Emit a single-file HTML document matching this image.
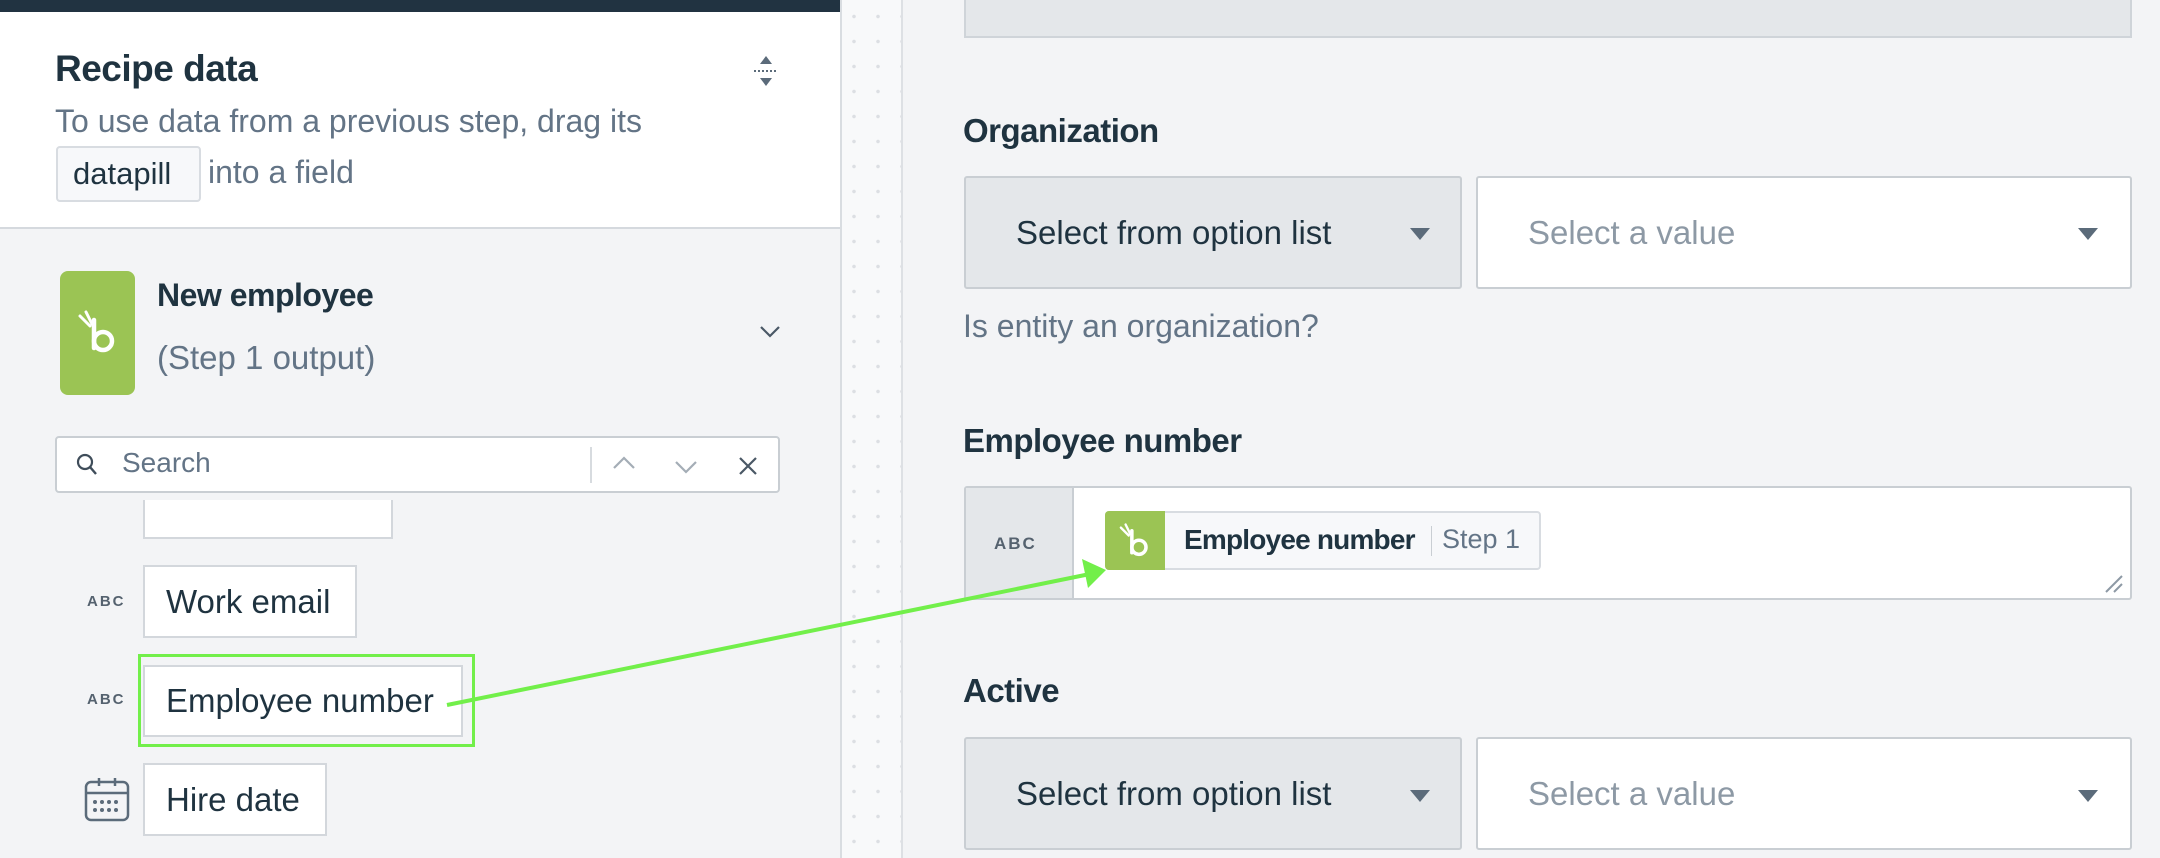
<!DOCTYPE html>
<html><head><meta charset="utf-8"><style>
*{margin:0;padding:0;box-sizing:border-box}
body{width:2160px;height:858px;overflow:hidden;background:#f3f4f6;font-family:"Liberation Sans",sans-serif;color:#1f3340;position:relative}
.a{position:absolute}
.t{white-space:nowrap}
.pill{position:absolute;background:#fff;border:2px solid #d3d7dc;font-size:33px;padding-left:21px;display:flex;align-items:center;color:#1f3340}
.abc{position:absolute;font-size:15px;font-weight:bold;letter-spacing:2px;color:#55626f}
.sel{position:absolute;border:2px solid #c9ced3;border-radius:3px;display:flex;align-items:center;font-size:33px}
.tri{position:absolute;width:0;height:0;border-left:10px solid transparent;border-right:10px solid transparent;border-top:12px solid #5b6b7a}
</style></head><body>
<div class="a" style="left:0;top:0;width:840px;height:229px;background:#fff;border-bottom:2px solid #d5d9de"></div>
<div class="a" style="left:0;top:0;width:840px;height:12px;background:#213341"></div>
<div class="a" style="left:840px;top:0;width:63px;height:858px;background-color:#f8f9fa;background-image:radial-gradient(circle,#dcdfe3 1.6px,transparent 2px);background-size:24px 25px;background-position:0px 4px;border-left:2px solid #d9dde1;border-right:2px solid #dde0e4"></div>
<div class="a t" style="left:55px;top:48px;font-size:37px;font-weight:bold;letter-spacing:-0.5px">Recipe data</div>
<svg class="a" style="left:753px;top:54px" width="26" height="34" viewBox="0 0 26 34"><path d="M13 2 L19 10 L7 10Z" fill="#5b6b7a"/><path d="M13 32 L19 24 L7 24Z" fill="#5b6b7a"/><line x1="1" y1="17" x2="25" y2="17" stroke="#5b6b7a" stroke-width="2" stroke-dasharray="2 2"/></svg>
<div class="a t" style="left:55px;top:103px;font-size:32px;color:#637486">To use data from a previous step, drag its</div>
<div class="a t" style="left:56px;top:146px;width:145px;height:56px;background:#f7f8fa;border:2px solid #d8dce1;border-radius:4px;font-size:31px;color:#1f3340;padding:8px 0 0 15px">datapill</div>
<div class="a t" style="left:208px;top:154px;font-size:32px;color:#637486">into a field</div>

<div class="a" style="left:60px;top:271px;width:75px;height:124px;background:#9bc454;border-radius:8px"></div>
<svg class="a" style="left:70px;top:308px" width="56" height="50" viewBox="0 0 56 50"><path d="M10 8 L20 18 M16 4 L22 16" stroke="#fff" stroke-width="3" stroke-linecap="round" fill="none"/><path d="M24 12 L24 40" stroke="#fff" stroke-width="4.5" stroke-linecap="round"/><circle cx="33" cy="33" r="9" stroke="#fff" stroke-width="4.5" fill="none"/></svg>
<div class="a t" style="left:157px;top:277px;font-size:32px;font-weight:bold;letter-spacing:-0.5px">New employee</div>
<div class="a t" style="left:157px;top:339px;font-size:33px;color:#637486">(Step 1 output)</div>
<svg class="a" style="left:759px;top:325px" width="22" height="14" viewBox="0 0 22 14"><path d="M2 2 L11 11 L20 2" stroke="#4a5866" stroke-width="2.2" fill="none"/></svg>

<div class="a" style="left:55px;top:436px;width:725px;height:57px;background:#fff;border:2px solid #c9ced3;border-radius:4px"></div>
<svg class="a" style="left:76px;top:453px" width="22" height="24" viewBox="0 0 22 24"><circle cx="9" cy="9" r="7" stroke="#3f4d5a" stroke-width="2.2" fill="none"/><path d="M14 14 L20 21" stroke="#3f4d5a" stroke-width="2.4"/></svg>
<div class="a t" style="left:122px;top:447px;font-size:28px;color:#637486">Search</div>
<div class="a" style="left:590px;top:447px;width:2px;height:36px;background:#d7dbdf"></div>
<svg class="a" style="left:612px;top:456px" width="24" height="14" viewBox="0 0 24 14"><path d="M2 12 L12 2 L22 12" stroke="#a4adb6" stroke-width="2.2" fill="none"/></svg>
<svg class="a" style="left:674px;top:460px" width="24" height="14" viewBox="0 0 24 14"><path d="M2 2 L12 12 L22 2" stroke="#a4adb6" stroke-width="2.2" fill="none"/></svg>
<svg class="a" style="left:738px;top:456px" width="20" height="20" viewBox="0 0 20 20"><path d="M2 2 L18 18 M18 2 L2 18" stroke="#4a5866" stroke-width="2.2"/></svg>

<div class="a" style="left:143px;top:500px;width:250px;height:39px;background:#fff;border:2px solid #d3d7dc;border-top:none"></div>
<div class="abc" style="left:87px;top:593px">ABC</div>
<div class="pill" style="left:143px;top:565px;width:214px;height:73px">Work email</div>
<div class="abc" style="left:87px;top:691px">ABC</div>
<div class="pill" style="left:143px;top:665px;width:320px;height:72px">Employee number</div>
<div class="a" style="left:138px;top:654px;width:337px;height:93px;border:3px solid #72ef4a"></div>
<svg class="a" style="left:84px;top:776px" width="48" height="46" viewBox="0 0 48 46"><rect x="2" y="6" width="42" height="38" rx="5" stroke="#5b6b7a" stroke-width="2.5" fill="none"/><line x1="2" y1="17" x2="44" y2="17" stroke="#5b6b7a" stroke-width="2.5"/><line x1="15" y1="2" x2="15" y2="10" stroke="#5b6b7a" stroke-width="2.5"/><line x1="31" y1="2" x2="31" y2="10" stroke="#5b6b7a" stroke-width="2.5"/><g fill="#5b6b7a"><circle cx="11" cy="26" r="2"/><circle cx="18" cy="26" r="2"/><circle cx="25" cy="26" r="2"/><circle cx="32" cy="26" r="2"/><circle cx="11" cy="34" r="2"/><circle cx="18" cy="34" r="2"/><circle cx="25" cy="34" r="2"/><circle cx="32" cy="34" r="2"/></g></svg>
<div class="pill" style="left:143px;top:763px;width:184px;height:73px">Hire date</div>

<div class="a" style="left:964px;top:-2px;width:1168px;height:40px;background:#e4e7ea;border:2px solid #cfd4d9"></div>
<div class="a t" style="left:963px;top:112px;font-size:33px;font-weight:bold;letter-spacing:-0.5px">Organization</div>
<div class="sel" style="left:964px;top:176px;width:498px;height:113px;background:#e4e7ea;padding-left:50px">Select from option list</div>
<div class="tri" style="left:1410px;top:228px"></div>
<div class="sel" style="left:1476px;top:176px;width:656px;height:113px;background:#fff;padding-left:50px;color:#8d99a5">Select a value</div>
<div class="tri" style="left:2078px;top:228px"></div>
<div class="a t" style="left:963px;top:308px;font-size:32px;color:#637486">Is entity an organization?</div>

<div class="a t" style="left:963px;top:422px;font-size:33px;font-weight:bold;letter-spacing:-0.5px">Employee number</div>
<div class="a" style="left:964px;top:486px;width:1168px;height:114px;background:#fff;border:2px solid #c9ced3;border-radius:3px"></div>
<div class="a" style="left:966px;top:488px;width:108px;height:110px;background:#e4e7ea;border-right:2px solid #c9ced3"></div>
<div class="abc" style="left:994px;top:534px;font-size:17px">ABC</div>
<div class="a" style="left:1105px;top:511px;width:436px;height:59px;background:#f7f8fa;border:2px solid #d8dce1;border-radius:4px"></div>
<div class="a" style="left:1105px;top:511px;width:60px;height:59px;background:#9bc454;border-radius:4px 0 0 4px"></div>
<svg class="a" style="left:1113px;top:519px" width="44" height="44" viewBox="0 0 56 50"><path d="M10 8 L20 18 M16 4 L22 16" stroke="#fff" stroke-width="3" stroke-linecap="round" fill="none"/><path d="M24 12 L24 40" stroke="#fff" stroke-width="4.5" stroke-linecap="round"/><circle cx="33" cy="33" r="9" stroke="#fff" stroke-width="4.5" fill="none"/></svg>
<div class="a t" style="left:1184px;top:524px;font-size:28px;font-weight:bold;letter-spacing:-0.8px">Employee number</div>
<div class="a" style="left:1431px;top:526px;width:1px;height:30px;background:#c9ced3"></div>
<div class="a t" style="left:1442px;top:524px;font-size:27px;color:#637486">Step 1</div>
<svg class="a" style="left:2102px;top:572px" width="22" height="22" viewBox="0 0 22 22"><path d="M4 20 L20 4 M12 20 L20 12" stroke="#8d99a5" stroke-width="2"/></svg>

<div class="a t" style="left:963px;top:672px;font-size:33px;font-weight:bold;letter-spacing:-0.5px">Active</div>
<div class="sel" style="left:964px;top:737px;width:498px;height:113px;background:#e4e7ea;padding-left:50px">Select from option list</div>
<div class="tri" style="left:1410px;top:790px"></div>
<div class="sel" style="left:1476px;top:737px;width:656px;height:113px;background:#fff;padding-left:50px;color:#8d99a5">Select a value</div>
<div class="tri" style="left:2078px;top:790px"></div>

<svg class="a" style="left:0;top:0" width="2160" height="858" viewBox="0 0 2160 858"><line x1="447" y1="705" x2="1090" y2="574" stroke="#72ef4a" stroke-width="4"/><path d="M1106 570 L1082 559 L1088 588Z" fill="#72ef4a"/></svg>
</body></html>
